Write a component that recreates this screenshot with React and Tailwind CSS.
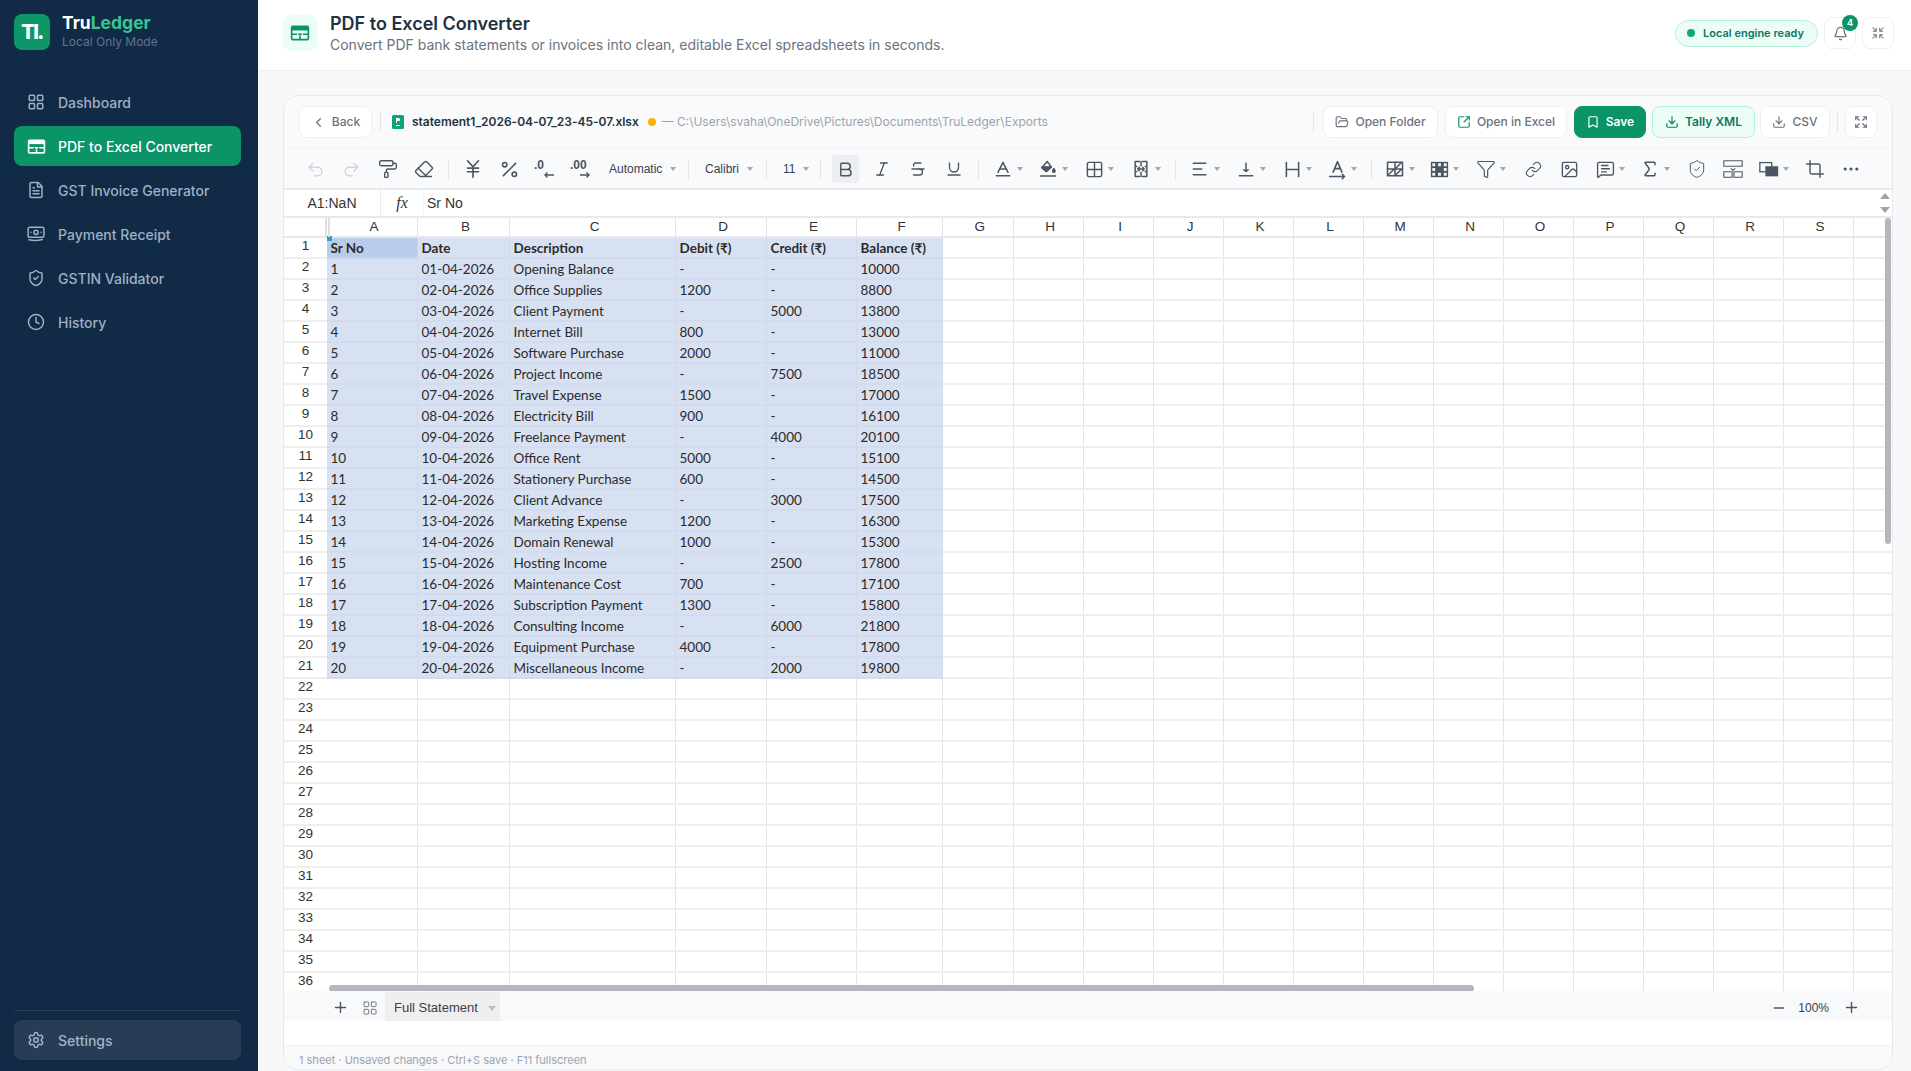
import React from "react";
import {
  LayoutGrid, FileText, ShieldCheck, Clock, Settings, ChevronLeft, FolderOpen, SquareArrowOutUpRight,
  Bookmark, Download, Expand, Bell, Plus, Minus, Undo2, Redo2, PaintRoller, Eraser, JapaneseYen, Percent,
  Bold, Italic, Strikethrough, Underline, Baseline, Grid2x2, Funnel, Link, Image, MessageSquareText,
  Sigma, Crop, Ellipsis,
} from "lucide-react";

const rows = [
  ["1", "01-04-2026", "Opening Balance", "-", "-", "10000"],
  ["2", "02-04-2026", "Office Supplies", "1200", "-", "8800"],
  ["3", "03-04-2026", "Client Payment", "-", "5000", "13800"],
  ["4", "04-04-2026", "Internet Bill", "800", "-", "13000"],
  ["5", "05-04-2026", "Software Purchase", "2000", "-", "11000"],
  ["6", "06-04-2026", "Project Income", "-", "7500", "18500"],
  ["7", "07-04-2026", "Travel Expense", "1500", "-", "17000"],
  ["8", "08-04-2026", "Electricity Bill", "900", "-", "16100"],
  ["9", "09-04-2026", "Freelance Payment", "-", "4000", "20100"],
  ["10", "10-04-2026", "Office Rent", "5000", "-", "15100"],
  ["11", "11-04-2026", "Stationery Purchase", "600", "-", "14500"],
  ["12", "12-04-2026", "Client Advance", "-", "3000", "17500"],
  ["13", "13-04-2026", "Marketing Expense", "1200", "-", "16300"],
  ["14", "14-04-2026", "Domain Renewal", "1000", "-", "15300"],
  ["15", "15-04-2026", "Hosting Income", "-", "2500", "17800"],
  ["16", "16-04-2026", "Maintenance Cost", "700", "-", "17100"],
  ["17", "17-04-2026", "Subscription Payment", "1300", "-", "15800"],
  ["18", "18-04-2026", "Consulting Income", "-", "6000", "21800"],
  ["19", "19-04-2026", "Equipment Purchase", "4000", "-", "17800"],
  ["20", "20-04-2026", "Miscellaneous Income", "-", "2000", "19800"],
];
const headers = ["Sr No", "Date", "Description", "Debit (₹)", "Credit (₹)", "Balance (₹)"];
const cols = "ABCDEFGHIJKLMNOPQRS".split("");

function Svg({ size = 20, children, className = "" }) {
  return (
    <svg width={size} height={size} viewBox="0 0 24 24" fill="none" stroke="currentColor" strokeWidth="1.8" strokeLinecap="round" strokeLinejoin="round" className={className}>
      {children}
    </svg>
  );
}

function ConverterIcon({ size = 20 }) {
  return (
    <svg width={size} height={size} viewBox="0 0 24 24" fill="none">
      <rect x="2" y="4" width="20" height="16" rx="1.5" fill="none" stroke="currentColor" strokeWidth="2" />
      <rect x="2" y="4" width="20" height="5" fill="currentColor" />
      <path d="M2 13.5h6.5M15.5 13.5H22M12 16v4" stroke="currentColor" strokeWidth="2" />
      <path d="M9 12.5h6l-3 3.5z" fill="currentColor" />
    </svg>
  );
}
function ReceiptIcon({ size = 20 }) {
  return (
    <Svg size={size}>
      <rect x="2.5" y="4" width="19" height="12" rx="2" />
      <circle cx="12" cy="10" r="2.6" />
      <path d="M6 10h.01M18 10h.01M3.5 19c5 1.2 11 1.2 16-.4" />
    </Svg>
  );
}
function ShrinkFour({ size = 16 }) {
  return (
    <Svg size={size}>
      <path d="M3 3l6 6M9 4v5H4M21 3l-6 6M15 4v5h5M3 21l6-6M9 20v-5H4M21 21l-6-6M15 20v-5h5" />
    </Svg>
  );
}
function DecLeft() {
  return (
    <div className="relative w-[22px] h-[22px] text-[#4b5563]">
      <span className="absolute left-0 top-[0px] text-[12px] leading-[14px] font-bold font-['Liberation_Sans',sans-serif]">.0</span>
      <svg className="absolute left-[9px] top-[13px]" width="12" height="8" viewBox="0 0 12 8" fill="none" stroke="currentColor" strokeWidth="1.4"><path d="M11 4H2M4.5 1.5 2 4l2.5 2.5" /></svg>
    </div>
  );
}
function DecRight() {
  return (
    <div className="relative w-[22px] h-[22px] text-[#4b5563]">
      <span className="absolute left-0 top-[0px] text-[12px] leading-[14px] font-bold font-['Liberation_Sans',sans-serif]">.00</span>
      <svg className="absolute left-[9px] top-[13px]" width="12" height="8" viewBox="0 0 12 8" fill="none" stroke="currentColor" strokeWidth="1.4"><path d="M1 4h9M7.5 1.5 10 4 7.5 6.5" /></svg>
    </div>
  );
}
function MergeIcon() {
  return (
    <Svg size={20}>
      <path d="M10 3H5v18h5M14 3h5v18h-5M5 9h2M5 15h2M17 9h2M17 15h2M12 3v5M12 16v5M8 12h8M10 10l-2 2 2 2M14 10l2 2-2 2" />
    </Svg>
  );
}
function FillIcon() {
  return (
    <Svg size={20}>
      <path d="M11 3 4.5 10.5 10 15l6-5.5zM5 10h11" />
      <path d="M4.5 10.5 10 15l6-5.5H5z" fill="currentColor" />
      <path d="M19 11.5c.8 1.2 1.5 2 1.5 2.8a1.5 1.5 0 0 1-3 0c0-.8.7-1.6 1.5-2.8z" fill="currentColor" />
      <path d="M3 20.5h18" />
    </Svg>
  );
}
function AlignIcon() {
  return <Svg size={20}><path d="M4 5h15M4 12h10M4 19h15" /></Svg>;
}
function ValignIcon() {
  return <Svg size={20}><path d="M12 5v10M9.5 13l2.5 2 2.5-2M4 20h16" /></Svg>;
}
function WrapIcon() {
  return <Svg size={21}><path d="M5 4v16M19 4v16M5 12h14" /></Svg>;
}
function RotateIcon() {
  return <Svg size={21}><path d="M7 15l5-12 5 12M8.7 11h6.6M3 20h17M17.5 17.5 20 20l-2.5 2.5" /></Svg>;
}
function CondIcon() {
  return (
    <Svg size={20}>
      <rect x="3" y="4" width="18" height="16" />
      <path d="M12 4v16M3 12h18M4 19l7-7M13 11l7-7M13 19l7-7" />
    </Svg>
  );
}
function TableFill() {
  return (
    <svg width="23" height="23" viewBox="0 0 24 24">
      <rect x="3" y="4" width="18" height="16" fill="#4b5563" />
      <path d="M4.5 5.5h3v3h-3zM10.5 5.5h3v3h-3zM16.5 5.5h3v3h-3zM4.5 15.5h3v3h-3zM16.5 15.5h3v3h-3zM4.5 10.5h3v3h-3zM16.5 10.5h3v3h-3zM10.5 15.5h3v3h-3z" fill="#f3f4f6" />
    </svg>
  );
}
function SplitIcon() {
  return (
    <Svg size={22}>
      <rect x="2" y="3" width="20" height="6" strokeWidth="1.2" />
      <rect x="2" y="15" width="9" height="6" strokeWidth="1.2" />
      <rect x="13" y="15" width="9" height="6" strokeWidth="1.2" />
      <path d="M10 11.5l2 2 2-2" strokeWidth="1.2" />
    </Svg>
  );
}
function FreezeIcon() {
  return (
    <svg width="22" height="22" viewBox="0 0 24 24" fill="none">
      <rect x="2" y="5" width="13" height="10" stroke="#4b5563" strokeWidth="1.4" />
      <rect x="8" y="9" width="14" height="11" fill="#4b5563" />
    </svg>
  );
}

function Box({ children, className = "w-[36px]" }) {
  return <div className={`flex items-center justify-center shrink-0 h-full text-[#4b5563] ${className}`}>{children}</div>;
}
function Drop({ children, className = "" }) {
  return (
    <div className={`flex items-center shrink-0 h-full text-[#4b5563] ${className}`}>
      <div className="w-6 flex items-center justify-center">{children}</div>
      <Caret />
    </div>
  );
}
function Caret() {
  return <span className="block ml-[2px] w-0 h-0 border-x-[3px] border-x-transparent border-t-[4px] border-t-[#a3a8b0]" />;
}
function Sep({ className = "" }) {
  return <span className={`w-px h-[20px] bg-[#e3e5e8] shrink-0 ${className}`} />;
}

function NavItem({ icon, label, active }) {
  return (
    <div className={`h-10 rounded-lg flex items-center pl-3 gap-[12px] text-[14px] font-medium ${active ? "bg-[#0a9468] text-white" : "text-[#9fb0c4]"}`}>
      <span className="w-5 flex justify-center">{icon}</span>
      <span>{label}</span>
    </div>
  );
}

function Btn({ icon, label, className }) {
  return (
    <div className={`h-8 rounded-lg border flex items-center justify-center gap-[6px] text-[12px] font-medium shrink-0 ${className}`}>
      {icon}
      <span>{label}</span>
    </div>
  );
}

function Grid() {
  const cells = [];
  cells.push(<div key="corner" className="bg-white border-b-2 border-b-[#e8e8e8] border-r-2 border-r-[#dedede]" />);
  cols.forEach((c) => {
    cells.push(
      <div key={c} className="bg-white border-b-2 border-b-[#e8e8e8] border-r border-r-[#e3e3e3] flex items-center justify-center pl-[4px] text-[13.5px] text-[#333]">
        {c}
      </div>
    );
  });
  cells.push(<div key="hend" className="bg-white border-b-2 border-b-[#e8e8e8]" />);
  for (let r = 1; r <= 36; r++) {
    cells.push(
      <div key={`r${r}`} className="bg-white border-b-2 border-b-[#efefef] flex items-center justify-center pb-[2px] text-[13.5px] text-[#333]">
        {r}
      </div>
    );
    for (let c = 0; c < 19; c++) {
      const inSel = r <= 21 && c < 6;
      const first = r === 1 && c === 0;
      let text = "";
      if (r === 1 && c < 6) text = headers[c];
      else if (r <= 21 && c < 6) text = rows[r - 2][c];
      cells.push(
        <div
          key={`${r}-${c}`}
          className={`flex items-center pl-[3.5px] pt-[2px] overflow-hidden whitespace-nowrap font-['Lato',sans-serif] text-[13.5px] text-[#2b2b2b] border-r ${
            first ? "bg-[#b9cdeb] border-b-2 border-b-[#c9d6ec] border-r-[#c9d6ec]" : inSel ? "bg-[#d8e1f2] border-b-2 border-b-[#d2dcee] border-r-[#d0daec]" : "bg-white border-b-2 border-b-[#efefef] border-r-[#e5e5e5]"
          } ${r === 1 ? "font-bold" : ""}`}
        >
          {text}
        </div>
      );
    }
    cells.push(<div key={`e${r}`} className="bg-white border-b-2 border-b-[#efefef]" />);
  }
  return (
    <div className="relative flex-1 overflow-hidden bg-white font-['Liberation_Sans',sans-serif]">
      <div className="grid grid-cols-[43px_91px_92px_166px_91px_90px_86px_70.6px_repeat(12,70px)_1fr] grid-rows-[20px] auto-rows-[21px]">
        {cells}
      </div>
      <span className="absolute left-[43px] top-[18px] w-[5px] h-[5px] bg-[#2f9fd0]" />
      <span className="absolute left-[44px] top-0 w-[2px] h-[19px] bg-[#dedede]" />
      <div className="absolute left-[45px] top-[767px] w-[1145px] h-[7px] rounded bg-[#b6b6be]" />
      <div className="absolute right-[1px] top-0 w-[6px] h-[326px] rounded bg-[#b6b6be]" />
    </div>
  );
}

export default function App() {
  return (
    <div className="flex h-screen w-full overflow-hidden font-['Inter',sans-serif] bg-[#f7f8fa]">
      <aside className="w-[258px] shrink-0 bg-[#112a45] flex flex-col pl-[14px] pr-[17px] pb-[11px]">
        <div className="flex items-center gap-3 pt-[13px]">
          <div className="w-9 h-9 rounded-lg bg-[#0d9668] flex items-center justify-center text-white font-extrabold text-[20px] tracking-[-1.5px] leading-none">Tl.</div>
          <div>
            <div className="text-[17.5px] font-bold leading-[20px]">
              <span className="text-white">Tru</span>
              <span className="text-[#34c796]">Ledger</span>
            </div>
            <div className="text-[12px] leading-[16px] text-[#5f7590] mt-[1px]">Local Only Mode</div>
          </div>
        </div>
        <nav className="mt-[32px] flex flex-col gap-1">
          <NavItem icon={<LayoutGrid size={18} />} label="Dashboard" />
          <NavItem active icon={<ConverterIcon size={19} />} label="PDF to Excel Converter" />
          <NavItem icon={<FileText size={18} />} label="GST Invoice Generator" />
          <NavItem icon={<ReceiptIcon size={20} />} label="Payment Receipt" />
          <NavItem icon={<ShieldCheck size={18} />} label="GSTIN Validator" />
          <NavItem icon={<Clock size={18} />} label="History" />
        </nav>
        <div className="mt-auto border-t border-t-[#26405c] pt-[9px]">
          <div className="h-10 rounded-lg bg-[#283d55] flex items-center pl-3 gap-[12px] text-[14px] font-medium text-[#9fb4cc]">
            <span className="w-5 flex justify-center"><Settings size={18} /></span>
            <span>Settings</span>
          </div>
        </div>
      </aside>

      <main className="flex-1 min-w-0 flex flex-col">
        <header className="h-[71px] shrink-0 bg-white border-b border-b-[#eef0f3] flex items-center pl-6 pr-[17px] pb-[4px]">
          <div className="w-9 h-9 rounded-[10px] bg-[#ecfdf5] flex items-center justify-center text-[#0a9468]">
            <ConverterIcon size={20} />
          </div>
          <div className="ml-3 mt-[2px]">
            <div className="text-[18px] font-semibold leading-[22px] text-[#22303f]">PDF to Excel Converter</div>
            <div className="text-[14px] leading-[20px] text-[#6b7280]">Convert PDF bank statements or invoices into clean, editable Excel spreadsheets in seconds.</div>
          </div>
          <div className="ml-auto flex items-center">
            <div className="h-[27px] w-[143px] rounded-full bg-[#ecfdf5] border border-[#b6efdc] flex items-center pl-[11px] gap-2 text-[11px] font-semibold text-[#0f7664]">
              <span className="w-2 h-2 rounded-full bg-[#12a57a]" />
              Local engine ready
            </div>
            <div className="relative ml-[6px] w-8 h-8 rounded-lg bg-white border border-[#eef0f3] flex items-center justify-center text-[#6b7280]">
              <Bell size={15} />
              <span className="absolute -top-[3px] -right-[3px] w-4 h-4 rounded-full bg-[#0a9468] text-white text-[9px] font-bold flex items-center justify-center">4</span>
            </div>
            <div className="ml-[6px] w-8 h-8 rounded-lg bg-white border border-[#eef0f3] flex items-center justify-center text-[#6b7280]">
              <ShrinkFour size={14} />
            </div>
          </div>
        </header>

        <div className="flex-1 min-h-0 flex flex-col pl-[25px] pr-[18px] pt-[24px] pb-px">
          <div className="flex-1 min-h-0 flex flex-col rounded-[16px] border border-[#e6e8ec] overflow-hidden bg-white">
            <div className="h-[53px] shrink-0 bg-[#f9fafb] border-b border-b-[#f0f1f4] flex items-center pl-[15px] pr-[15px]">
              <Btn className="w-[73px] bg-white border-[#eef0f3] text-[#6b7280]" icon={<ChevronLeft size={15} />} label="Back" />
              <Sep className="ml-[8px]" />
              <svg className="ml-[10px] shrink-0" width="14" height="14" viewBox="0 0 14 14">
                <rect x="1" y="0" width="12" height="14" rx="1.5" fill="#10a37a" />
                <path d="M5 3h2.6a1.5 1.5 0 0 1 0 3H6v2H5zM5 10h4v1H5z" fill="#fff" />
              </svg>
              <span className="ml-[7px] text-[12px] tracking-[-0.02px] font-semibold text-[#26323f] whitespace-nowrap">statement1_2026-04-07_23-45-07.xlsx</span>
              <span className="ml-[9px] w-2 h-2 rounded-full bg-[#f5b50a] shrink-0" />
              <span className="ml-[6px] text-[12px] text-[#9ca3af] whitespace-nowrap">— C:\Users\svaha\OneDrive\Pictures\Documents\TruLedger\Exports</span>
              <div className="ml-auto flex items-center gap-[7px]">
                <Sep className="mr-[2px]" />
                <Btn className="w-[115px] bg-white border-[#eef0f3] text-[#6b7280]" icon={<FolderOpen size={14} />} label="Open Folder" />
                <Btn className="w-[122px] bg-white border-[#eef0f3] text-[#6b7280]" icon={<SquareArrowOutUpRight size={14} className="text-[#0a9468]" />} label="Open in Excel" />
                <Btn className="w-[72px] font-semibold bg-[#0a9468] border-[#0a9468] text-white" icon={<Bookmark size={14} />} label="Save" />
                <Btn className="w-[103px] -ml-[1px] font-semibold bg-[#ecfdf5] border-[#b6efdc] text-[#0f7664]" icon={<Download size={14} />} label="Tally XML" />
                <Btn className="w-[70px] -ml-[2px] bg-white border-[#eef0f3] text-[#6b7280]" icon={<Download size={14} />} label="CSV" />
                <Sep />
                <div className="w-8 h-8 rounded-lg bg-white border border-[#eef0f3] flex items-center justify-center text-[#6b7280] shrink-0">
                  <Expand size={14} />
                </div>
              </div>
            </div>

            <div className="h-[41px] shrink-0 bg-[#f9fafb] border-b-2 border-b-[#e8e9ec] flex items-center pl-[13px] pt-[1px] overflow-hidden">
              <Box className="w-[36px] text-[#c9ced6]"><Undo2 size={19} strokeWidth={1.5} className="text-[#c9ced6]" /></Box>
              <Box className="w-[37px]"><Redo2 size={19} strokeWidth={1.5} className="text-[#c9ced6]" /></Box>
              <Box><PaintRoller size={20} strokeWidth={1.7} /></Box>
              <Box><Eraser size={20} strokeWidth={1.7} /></Box>
              <Sep className="ml-[6px]" />
              <Box className="w-[36px] ml-[6px]"><JapaneseYen size={22} strokeWidth={1.8} /></Box>
              <Box><Percent size={21} strokeWidth={1.8} /></Box>
              <Box><DecLeft /></Box>
              <Box><DecRight /></Box>
              <div className="ml-[10px] w-[66px] shrink-0 flex items-center text-[12px] text-[#374151] font-['Liberation_Sans',sans-serif]">
                <span>Automatic</span><span className="ml-[6px] flex items-center"><Caret /></span>
              </div>
              <Sep className="ml-[13px]" />
              <div className="ml-[16px] w-[50px] shrink-0 flex items-center text-[12px] text-[#374151] font-['Liberation_Sans',sans-serif]">
                <span>Calibri</span><span className="ml-[6px] flex items-center"><Caret /></span>
              </div>
              <Sep className="ml-[11px]" />
              <div className="ml-[16px] w-[26px] shrink-0 flex items-center text-[12px] text-[#374151] font-['Liberation_Sans',sans-serif]">
                <span>11</span><span className="ml-[6px] flex items-center"><Caret /></span>
              </div>
              <Sep className="ml-[11px]" />
              <Box className="w-[36px] ml-[6px]">
                <span className="w-[27px] h-[28px] rounded bg-[#eceef1] flex items-center justify-center"><Bold size={19} strokeWidth={1.8} /></span>
              </Box>
              <Box className="w-[36px] ml-[1px]"><Italic size={18} strokeWidth={1.8} /></Box>
              <Box><Strikethrough size={18} strokeWidth={1.8} /></Box>
              <Box><Underline size={18} strokeWidth={1.8} /></Box>
              <Sep className="ml-[6px]" />
              <Drop className="ml-[12px] w-[45px]"><Baseline size={20} strokeWidth={1.8} /></Drop>
              <Drop className="w-[46px]"><FillIcon /></Drop>
              <Drop className="w-[47px]"><Grid2x2 size={19} strokeWidth={1.8} /></Drop>
              <Drop className="w-[40px]"><MergeIcon /></Drop>
              <Sep className="ml-[6px]" />
              <Drop className="ml-[12px] w-[46px]"><AlignIcon /></Drop>
              <Drop className="w-[46px]"><ValignIcon /></Drop>
              <Drop className="w-[45px]"><WrapIcon /></Drop>
              <Drop className="w-[40px]"><RotateIcon /></Drop>
              <Sep className="ml-[6px]" />
              <Drop className="ml-[11px] w-[44px]"><CondIcon /></Drop>
              <Drop className="w-[47px]"><TableFill /></Drop>
              <Drop className="w-[41px]"><Funnel size={20} strokeWidth={1.4} /></Drop>
              <Box><Link size={17} strokeWidth={1.5} /></Box>
              <Box><Image size={19} strokeWidth={1.7} /></Box>
              <Drop className="ml-[6px] w-[45px]"><MessageSquareText size={19} strokeWidth={1.7} /></Drop>
              <Drop className="w-[41px]"><Sigma size={20} strokeWidth={1.8} /></Drop>
              <Box><ShieldCheck size={20} strokeWidth={1.2} /></Box>
              <Box><SplitIcon /></Box>
              <div className="ml-[6px] w-[40px] flex items-center shrink-0 h-full">
                <div className="w-6 flex items-center justify-center"><FreezeIcon /></div>
                <Caret />
              </div>
              <Box><Crop size={20} strokeWidth={1.7} /></Box>
              <Box><Ellipsis size={20} strokeWidth={1.8} /></Box>
            </div>

            <div className="h-[28px] shrink-0 bg-white border-b-2 border-b-[#e8e9ec] flex items-center text-[14px] text-[#333] font-['Liberation_Sans',sans-serif]">
              <div className="w-[97px] h-full flex items-center justify-center border-r border-r-[#ececec]">A1:NaN</div>
              <div className="w-[43px] h-full flex items-center justify-center border-r border-r-[#f3f3f3] font-['Liberation_Serif',serif] italic text-[16px]">fx</div>
              <div className="pl-[3px]">Sr No</div>
              <div className="ml-auto mr-[2px] flex flex-col gap-[8px]">
                <span className="block w-0 h-0 border-x-[5px] border-x-transparent border-b-[6px] border-b-[#9ca3af]" />
                <span className="block w-0 h-0 border-x-[5px] border-x-transparent border-t-[6px] border-t-[#9ca3af]" />
              </div>
            </div>

            <Grid />

            <div className="h-[30px] shrink-0 bg-[#f8f9fb] flex items-stretch pl-[48px] pr-[32px] font-['Liberation_Sans',sans-serif]">
              <div className="flex items-center pt-[3px]">
                <Plus size={17} className="text-[#4b5563]" />
                <LayoutGrid size={16} strokeWidth={1.4} className="ml-[13px] text-[#6b7280]" />
              </div>
              <div className="ml-[7px] mt-px w-[115px] shrink-0 bg-[#efefef] flex items-center pl-[9px] pt-[3px] text-[13px] text-[#374151] whitespace-nowrap">
                Full Statement
                <span className="block ml-[10px] w-0 h-0 border-x-[4px] border-x-transparent border-t-[5px] border-t-[#bdbdbd]" />
              </div>
              <div className="ml-auto flex items-center pt-[3px]">
                <Minus size={16} className="text-[#4b5563]" />
                <span className="ml-[11px] text-[12px] text-[#374151]">100%</span>
                <Plus size={17} className="ml-[14px] text-[#4b5563]" />
              </div>
            </div>
            <div className="h-[24px] shrink-0 bg-white" />
            <div className="h-[24px] shrink-0 bg-[#f8f9fb] border-t border-t-[#f3f4f6] flex items-center pl-[15px] pt-[5px] text-[11px] text-[#9ca3af]">
              1 sheet · Unsaved changes · Ctrl+S save · F11 fullscreen
            </div>
          </div>
        </div>
      </main>
    </div>
  );
}
